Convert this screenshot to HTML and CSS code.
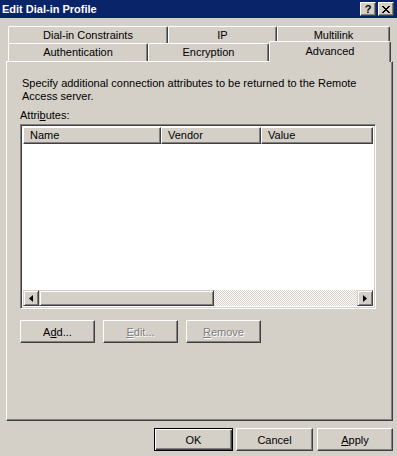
FILE: index.html
```html
<!DOCTYPE html>
<html>
<head>
    <title>Edit Dial-in Profile</title>
    <link rel="stylesheet" href="styles.css">
</head>
<body>
    <div class="window">
        <div class="titlebar">
            <span class="title">Edit Dial-in Profile</span>
            <div class="caption-buttons">
                <span class="cap-btn help">?</span>
                <span class="cap-btn close">
                    <svg width="8" height="7" viewBox="0 0 8 7"><path d="M0 0h2v1h1v1h2V1h1V0h2v1H7v1H6v1H5v1h1v1h1v1h1v1H6V6H5V5H3v1H2v1H0V6h1V5h1V4h1V3H2V2H1V1H0z" fill="#000"/></svg>
                </span>
            </div>
        </div>

        <div class="tabstrip">
            <div class="tab-row back">
                <div class="tab w-dial">Dial-in Constraints</div>
                <div class="tab w-ip">IP</div>
                <div class="tab w-multi">Multilink</div>
            </div>
            <div class="tab-row front">
                <div class="tab w-auth">Authentication</div>
                <div class="tab w-enc">Encryption</div>
                <div class="tab selected">Advanced</div>
            </div>
        </div>

        <div class="panel">
            <p class="desc">Specify additional connection attributes to be returned to the Remote Access server.</p>
            <p class="label">Attri<u>b</u>utes:</p>
            <div class="listview">
                <div class="list-header">
                    <div class="col col-name">Name</div>
                    <div class="col col-vendor">Vendor</div>
                    <div class="col col-value">Value</div>
                </div>
                <div class="list-body"></div>
                <div class="hscroll">
                    <span class="arrow-btn">
                        <svg width="4" height="7" viewBox="0 0 4 7"><path d="M4 0v7L0 3.5z" fill="#000"/></svg>
                    </span>
                    <span class="thumb"></span>
                    <span class="track"></span>
                    <span class="arrow-btn">
                        <svg width="4" height="7" viewBox="0 0 4 7"><path d="M0 0v7l4-3.5z" fill="#000"/></svg>
                    </span>
                </div>
            </div>
            <div class="list-actions">
                <button class="btn">A<u>d</u>d...</button>
                <button class="btn disabled"><u>E</u>dit...</button>
                <button class="btn disabled"><u>R</u>emove</button>
            </div>
        </div>

        <div class="dialog-buttons">
            <button class="btn default">OK</button>
            <button class="btn w-cancel">Cancel</button>
            <button class="btn w-apply"><u>A</u>pply</button>
        </div>
    </div>
</body>
</html>
```

FILE: styles.css
```css
* {
    padding: 0;
    margin: 0;
    box-sizing: border-box;
}
body {
    background-color: #d4d0c8;
    font-family: "Liberation Sans", Arial, sans-serif;
    font-size: 11px;
    color: #000;
}
.window {
    width: 397px;
    height: 456px;
    overflow: hidden;
    background-color: #d4d0c8;
}

/* title bar */
.titlebar {
    height: 18px;
    background-color: #0a246a;
    display: flex;
    align-items: center;
    justify-content: space-between;
    padding: 0 3px 0 2px;
}
.title {
    color: #fff;
    font-weight: bold;
    font-size: 11px;
}
.caption-buttons {
    display: flex;
    gap: 2px;
}
.cap-btn {
    width: 16px;
    height: 14px;
    background-color: #d4d0c8;
    border-top: 1px solid #fff;
    border-left: 1px solid #fff;
    border-right: 1px solid #404040;
    border-bottom: 1px solid #404040;
    box-shadow: inset -1px -1px #808080;
    display: flex;
    align-items: center;
    justify-content: center;
    font-weight: bold;
    font-size: 11px;
    line-height: 1;
}

/* tabs */
.tabstrip {
    padding-top: 8px;
}
.tab-row {
    display: flex;
    align-items: flex-start;
    margin-left: 8px;
}
.tab-row.back {
    height: 17px;
}
.tab-row.front {
    height: 18px;
}
.tab {
    height: 100%;
    border-top: 1px solid #fff;
    border-left: 1px solid #fff;
    border-right: 1px solid #404040;
    box-shadow: inset -1px 0 #808080;
    border-radius: 2px 2px 0 0;
    text-align: center;
    line-height: 16px;
    background-color: #d4d0c8;
}
.w-dial { width: 160px; }
.w-ip { width: 109px; }
.w-multi { width: 113px; }
.w-auth { width: 140px; }
.w-enc { width: 121px; }
.tab.selected {
    position: relative;
    z-index: 1;
    width: 122px;
    height: 21px;
    margin-top: -2px;
    line-height: 19px;
}

/* property page */
.panel {
    margin: 0 4px 0 6px;
    height: 360px;
    border-top: 1px solid #fff;
    border-left: 1px solid #fff;
    border-right: 1px solid #404040;
    border-bottom: 1px solid #404040;
    box-shadow: inset -1px -1px #808080;
    padding: 15px 0 0 13px;
}
.desc {
    padding-left: 2px;
    line-height: 13px;
    width: 345px;
}
.label {
    margin-top: 6px;
    line-height: 13px;
}
.listview {
    margin-top: 2px;
    width: 356px;
    height: 185px;
    border-top: 1px solid #808080;
    border-left: 1px solid #808080;
    border-right: 1px solid #fff;
    border-bottom: 1px solid #fff;
    box-shadow: inset 1px 1px #404040, inset -1px -1px #d4d0c8;
    background-color: #fff;
    padding: 2px;
    display: flex;
    flex-direction: column;
}
.list-header {
    display: flex;
    height: 17px;
}
.col {
    height: 17px;
    background-color: #d4d0c8;
    border-top: 1px solid #fff;
    border-left: 1px solid #fff;
    border-right: 1px solid #404040;
    border-bottom: 1px solid #404040;
    box-shadow: inset -1px -1px #808080;
    padding-left: 6px;
    line-height: 14px;
}
.col-name { width: 138px; }
.col-vendor { width: 100px; }
.col-value { flex: 1; }
.list-body {
    flex: 1;
}
.hscroll {
    display: flex;
    height: 16px;
}
.arrow-btn {
    width: 16px;
    height: 16px;
    background-color: #d4d0c8;
    border-top: 1px solid #d4d0c8;
    border-left: 1px solid #d4d0c8;
    border-right: 1px solid #404040;
    border-bottom: 1px solid #404040;
    box-shadow: inset 1px 1px #fff, inset -1px -1px #808080;
    display: flex;
    align-items: center;
    justify-content: center;
}
.thumb {
    width: 175px;
    height: 16px;
    background-color: #d4d0c8;
    border-top: 1px solid #d4d0c8;
    border-left: 1px solid #d4d0c8;
    border-right: 1px solid #404040;
    border-bottom: 1px solid #404040;
    box-shadow: inset 1px 1px #fff, inset -1px -1px #808080;
}
.track {
    flex: 1;
    background: repeating-conic-gradient(#fff 0 25%, #d4d0c8 0 50%) 0 0 / 2px 2px;
}

/* buttons */
.list-actions {
    display: flex;
    gap: 8px;
    margin-top: 11px;
}
.btn {
    width: 75px;
    height: 23px;
    font-family: inherit;
    font-size: 11px;
    background-color: #d4d0c8;
    color: #000;
    border-top: 1px solid #fff;
    border-left: 1px solid #fff;
    border-right: 1px solid #404040;
    border-bottom: 1px solid #404040;
    box-shadow: inset -1px -1px #808080;
}
.btn.disabled {
    color: #808080;
    text-shadow: 1px 1px #fff;
}
.dialog-buttons {
    display: flex;
    gap: 3px;
    margin: 7px 0 0 154px;
}
.btn.default {
    width: 79px;
    border: 1px solid #000;
    box-shadow: inset 1px 1px #fff, inset -1px -1px #404040, inset -2px -2px #808080;
}
.w-cancel { width: 77px; }
.w-apply { width: 76px; margin-left: 1px; }
```
